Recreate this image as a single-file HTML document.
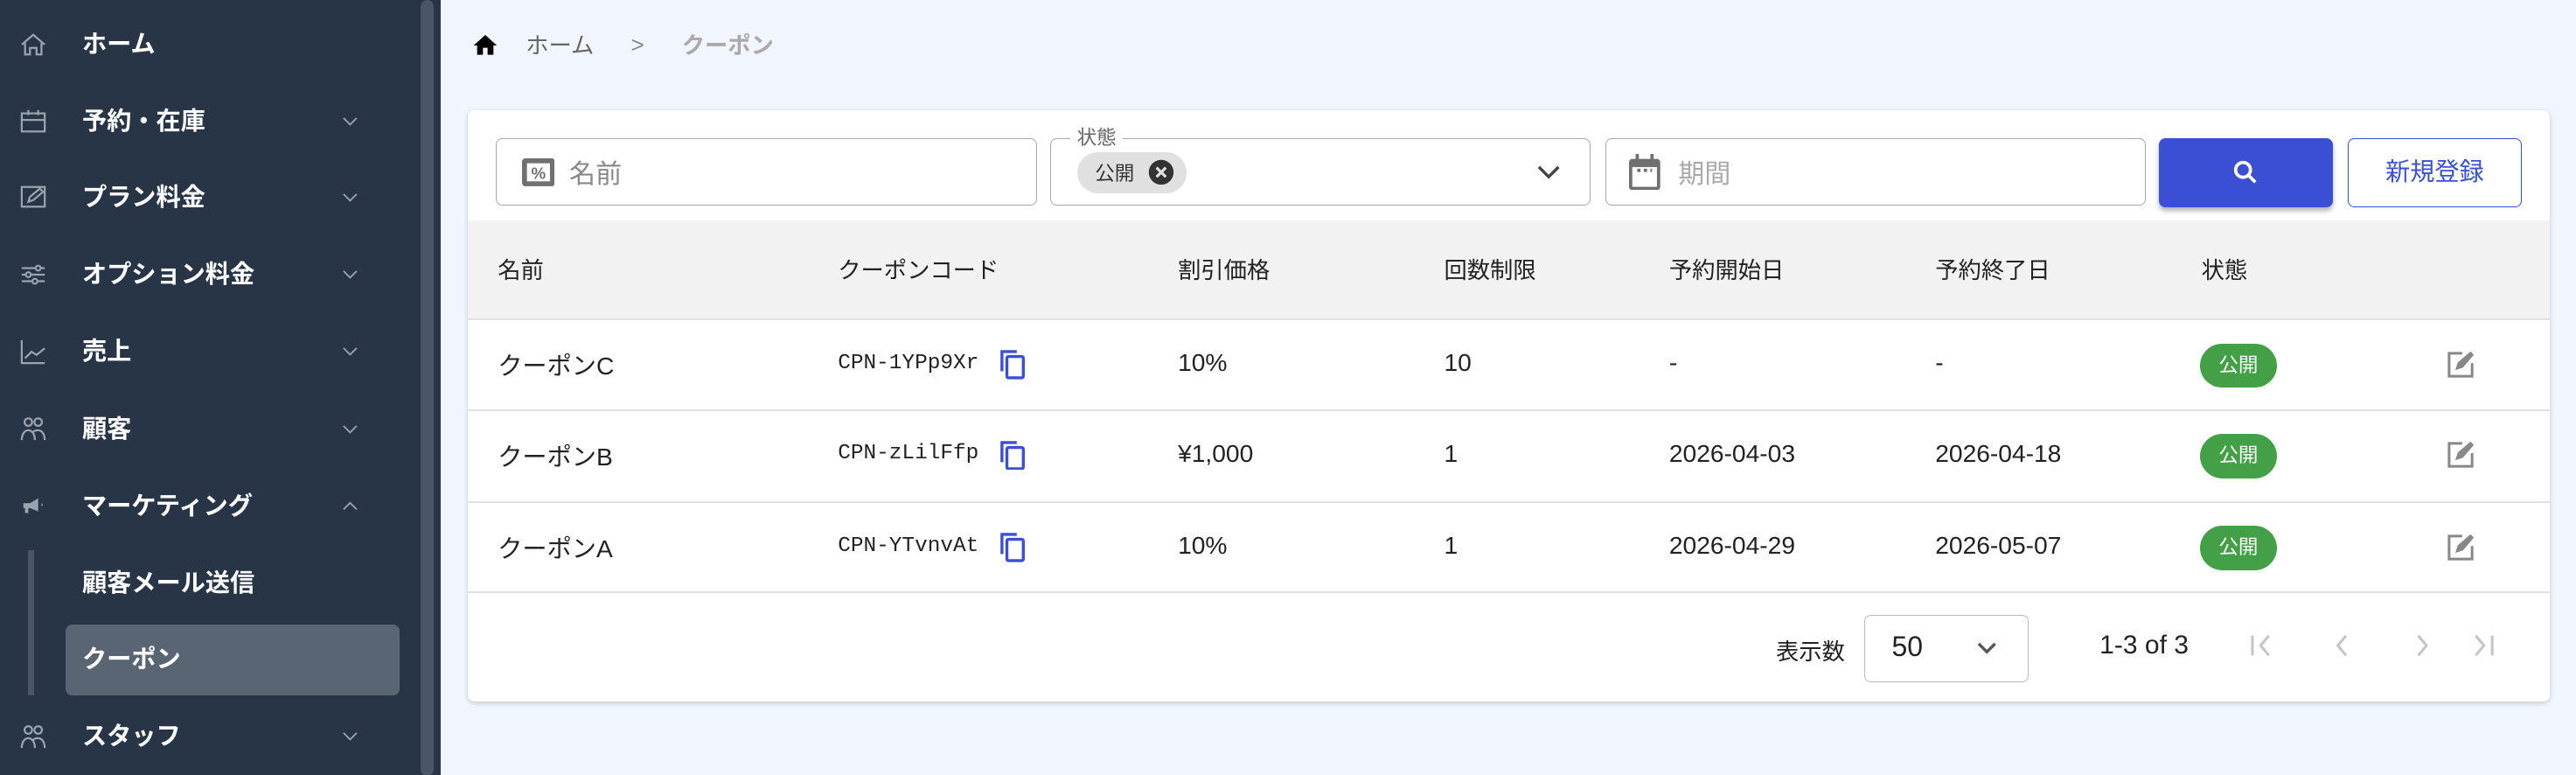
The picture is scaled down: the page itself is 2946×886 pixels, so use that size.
<!DOCTYPE html>
<html><head><meta charset="utf-8"><style>
html,body{margin:0;padding:0;width:2946px;height:886px;overflow:hidden;background:#f1f6fe}
#z{zoom:1.87883;width:1568px;height:472px;position:relative;font-family:"Liberation Sans","Noto Sans CJK JP",sans-serif;color:#222}
.a{position:absolute}
#side{left:0;top:0;width:268px;height:472px;background:#283547}
.mi{position:absolute;left:50px;color:#fff;font-weight:bold;font-size:15px;line-height:20px}
.ic{position:absolute;left:12px;width:16px;height:16px}
.ch{position:absolute;left:208px;width:10px;height:6px}
#card{left:285px;top:67px;width:1267px;height:360px;background:#fff;border-radius:4px;box-shadow:0 1px 3px rgba(0,0,0,.18)}
.inp{position:absolute;top:17px;height:41px;border:1px solid #a8a8a8;border-radius:4px;box-sizing:border-box}
.th{position:absolute;top:86px;font-size:14px;color:#222}
.td{position:absolute;font-size:15px;color:#222}
.code{font-family:"Liberation Mono",monospace;font-size:13px}
.chip{position:absolute;left:1054px;width:47px;height:27px;border-radius:14px;background:#43a047;color:#fff;font-size:12px;text-align:center;line-height:27px}
.hr{position:absolute;left:0;width:1267px;height:1px;background:#e0e0e0}
</style></head><body><div id="z">
<div class="a" id="side">
<svg class="ic" style="top:19px" viewBox="0 0 16 16" fill="none" stroke="#9aa3ad" stroke-width="1.2"><path d="M1 8L8 2l7 6M3 7v7h3v-4h4v4h3V7"/></svg><div class="mi" style="top:17px">ホーム</div>
<svg class="ic" style="top:66px" viewBox="0 0 16 16" fill="none" stroke="#9aa3ad" stroke-width="1.2"><rect x="1" y="3" width="14" height="11"/><path d="M1 7h14M5 1v3M11 1v3"/></svg><div class="mi" style="top:64px">予約・在庫</div>
<svg class="ic" style="top:112px" viewBox="0 0 16 16" fill="none" stroke="#9aa3ad" stroke-width="1.2"><rect x="1" y="2" width="14" height="12"/><path d="M5 11l1-3 6-5 2 2-6 5z"/></svg><div class="mi" style="top:110px">プラン料金</div>
<svg class="ic" style="top:159px" viewBox="0 0 16 16" fill="none" stroke="#9aa3ad" stroke-width="1.2"><path d="M1 4h14M1 8h14M1 12h14"/><circle cx="11" cy="4" r="1.5" fill="#283547"/><circle cx="5" cy="8" r="1.5" fill="#283547"/><circle cx="9" cy="12" r="1.5" fill="#283547"/></svg><div class="mi" style="top:157px">オプション料金</div>
<svg class="ic" style="top:206px" viewBox="0 0 16 16" fill="none" stroke="#9aa3ad" stroke-width="1.2"><path d="M1 1v14h14M3 12l4-4 3 2 5-4"/></svg><div class="mi" style="top:204px">売上</div>
<svg class="ic" style="top:253px" viewBox="0 0 16 16" fill="none" stroke="#9aa3ad" stroke-width="1.2"><circle cx="5" cy="4" r="2.3"/><circle cx="11" cy="4" r="2.3"/><path d="M1 15c0-4 2-6 4-6s4 2 4 6M8 10c1-1 2-1 3-1 2 0 4 2 4 6"/></svg><div class="mi" style="top:251px">顧客</div>
<svg class="ic" style="top:300px" viewBox="0 0 16 16" fill="#9aa3ad"><path d="M2 6h4l5-3v8L6 9H5v3H3V9H2z"/><path d="M13 6l1 1-1 1z"/></svg><div class="mi" style="top:298px">マーケティング</div>
<div class="a" style="left:17px;top:335px;width:4px;height:88px;background:#4a5565"></div>
<div class="mi" style="top:345px">顧客メール送信</div>
<div class="a" style="left:40px;top:380px;width:203px;height:43px;background:#5a6573;border-radius:4px"></div>
<div class="mi" style="top:391px">クーポン</div>
<svg class="ic" style="top:440px" viewBox="0 0 16 16" fill="none" stroke="#9aa3ad" stroke-width="1.2"><circle cx="5" cy="4" r="2.3"/><circle cx="11" cy="4" r="2.3"/><path d="M1 15c0-4 2-6 4-6s4 2 4 6M8 10c1-1 2-1 3-1 2 0 4 2 4 6"/></svg><div class="mi" style="top:438px">スタッフ</div>
<svg class="ch" style="top:71px" viewBox="0 0 10 6" fill="none" stroke="#9aa3ad"><path d="M1 1l4 4 4-4"/></svg>
<svg class="ch" style="top:117px" viewBox="0 0 10 6" fill="none" stroke="#9aa3ad"><path d="M1 1l4 4 4-4"/></svg>
<svg class="ch" style="top:164px" viewBox="0 0 10 6" fill="none" stroke="#9aa3ad"><path d="M1 1l4 4 4-4"/></svg>
<svg class="ch" style="top:211px" viewBox="0 0 10 6" fill="none" stroke="#9aa3ad"><path d="M1 1l4 4 4-4"/></svg>
<svg class="ch" style="top:258px" viewBox="0 0 10 6" fill="none" stroke="#9aa3ad"><path d="M1 1l4 4 4-4"/></svg>
<svg class="ch" style="top:305px" viewBox="0 0 10 6" fill="none" stroke="#9aa3ad"><path d="M1 5l4-4 4 4"/></svg>
<svg class="ch" style="top:445px" viewBox="0 0 10 6" fill="none" stroke="#9aa3ad"><path d="M1 1l4 4 4-4"/></svg>
<div class="a" style="left:256px;top:0;width:8px;height:472px;background:#4a5565;border-radius:4px"></div>
</div>
<svg class="a" style="left:287px;top:19px;width:17px;height:17px" viewBox="0 0 24 24"><path d="M10 20v-6h4v6h5v-8h3L12 3 2 12h3v8z"/></svg>
<div class="a" style="left:320px;top:16px;font-size:14px;color:#666">ホーム</div>
<div class="a" style="left:384px;top:19px;font-size:14px;color:#888">&gt;</div>
<div class="a" style="left:415px;top:16px;font-size:14px;color:#aaa;font-weight:bold">クーポン</div>
<div class="a" id="card">
<div class="inp" style="left:17px;width:329px"><svg class="a" style="left:15px;top:12px;width:20px;height:17px" viewBox="0 0 20 17"><rect x="0" y="0" width="20" height="17" rx="2" fill="#707070"/><rect x="3" y="3" width="14" height="11" fill="#fff"/><text x="10" y="12.5" font-size="10" text-anchor="middle" fill="#707070" font-weight="bold" font-family="Liberation Sans">%</text></svg><span class="a" style="left:44px;top:8px;font-size:16px;color:#888">名前</span></div>
<div class="inp" style="left:354px;width:329px"><span class="a" style="left:12px;top:-10px;background:#fff;padding:0 4px;font-size:12px;color:#666">状態</span><div class="a" style="left:16px;top:8px;width:67px;height:25px;border-radius:13px;background:#e0e0e0"><span class="a" style="left:11px;top:4px;font-size:12px;color:#333">公開</span><svg class="a" style="left:43px;top:4px;width:17px;height:17px" viewBox="0 0 18 18"><circle cx="9" cy="9" r="8" fill="#333"/><path d="M6 6l6 6M12 6l-6 6" stroke="#e0e0e0" stroke-width="1.8"/></svg></div><svg class="a" style="left:296px;top:16px;width:14px;height:9px" viewBox="0 0 14 9" fill="none" stroke="#444" stroke-width="1.8"><path d="M1 1l6 6 6-6"/></svg></div>
<div class="inp" style="left:692px;width:329px"><svg class="a" style="left:14px;top:9px;width:19px;height:22px" viewBox="0 0 19 22"><rect x="0" y="3" width="19" height="19" rx="2" fill="#707070"/><rect x="4" y="0" width="2" height="5" fill="#707070"/><rect x="13" y="0" width="2" height="5" fill="#707070"/><rect x="2" y="8" width="15" height="12" fill="#fff"/><path d="M5 10h2M9 10h2M13 10h1" stroke="#707070" stroke-width="2"/></svg><span class="a" style="left:44px;top:8px;font-size:16px;color:#aaa">期間</span></div>
<div class="a" style="left:1029px;top:17px;width:106px;height:42px;background:#3a4fd4;border-radius:4px;box-shadow:0 2px 3px rgba(0,0,0,.3)"><svg class="a" style="left:45px;top:13px;width:16px;height:16px" viewBox="0 0 16 16" fill="none" stroke="#fff" stroke-width="2"><circle cx="6.5" cy="6.5" r="4.5"/><path d="M10 10l4 4"/></svg></div>
<div class="a" style="left:1144px;top:17px;width:106px;height:42px;border:1px solid #3a4fd4;border-radius:4px;box-sizing:border-box;color:#3a4fd4;font-size:15px;text-align:center;line-height:40px">新規登録</div>
<div class="a" style="left:0;top:67px;width:1267px;height:60px;background:#f2f2f2"></div>
<div class="hr" style="top:127px"></div>
<div class="th" style="left:18px">名前</div><div class="th" style="left:225px">クーポンコード</div><div class="th" style="left:432px">割引価格</div><div class="th" style="left:594px">回数制限</div><div class="th" style="left:731px">予約開始日</div><div class="th" style="left:893px">予約終了日</div><div class="th" style="left:1055px">状態</div>
<div class="hr" style="top:182px"></div><div class="hr" style="top:238px"></div><div class="hr" style="top:293px"></div>

<div class="td" style="left:18px;top:144px">クーポンC</div><div class="td code" style="left:225px;top:147px">CPN-1YPp9Xr</div><div class="td" style="left:432px;top:145px">10%</div><div class="td" style="left:594px;top:145px">10</div><div class="td" style="left:731px;top:145px">-</div><div class="td" style="left:893px;top:145px">-</div>
<div class="td" style="left:18px;top:199px">クーポンB</div><div class="td code" style="left:225px;top:202px">CPN-zLilFfp</div><div class="td" style="left:432px;top:200px">¥1,000</div><div class="td" style="left:594px;top:200px">1</div><div class="td" style="left:731px;top:200px">2026-04-03</div><div class="td" style="left:893px;top:200px">2026-04-18</div>
<div class="td" style="left:18px;top:255px">クーポンA</div><div class="td code" style="left:225px;top:258px">CPN-YTvnvAt</div><div class="td" style="left:432px;top:256px">10%</div><div class="td" style="left:594px;top:256px">1</div><div class="td" style="left:731px;top:256px">2026-04-29</div><div class="td" style="left:893px;top:256px">2026-05-07</div>

<svg class="a" style="left:324px;top:146px;width:15px;height:18px" viewBox="0 0 15 18" fill="none" stroke="#3a4fd4" stroke-width="1.8"><path d="M1 13V1h9"/><rect x="4" y="4" width="10" height="13" rx="1"/></svg>
<svg class="a" style="left:324px;top:201px;width:15px;height:18px" viewBox="0 0 15 18" fill="none" stroke="#3a4fd4" stroke-width="1.8"><path d="M1 13V1h9"/><rect x="4" y="4" width="10" height="13" rx="1"/></svg>
<svg class="a" style="left:324px;top:257px;width:15px;height:18px" viewBox="0 0 15 18" fill="none" stroke="#3a4fd4" stroke-width="1.8"><path d="M1 13V1h9"/><rect x="4" y="4" width="10" height="13" rx="1"/></svg>
<div class="chip" style="top:142px">公開</div><div class="chip" style="top:197px">公開</div><div class="chip" style="top:253px">公開</div>
<svg class="a" style="left:1205px;top:147px;width:16px;height:16px" viewBox="0 0 16 16" fill="none" stroke="#888" stroke-width="1.6"><path d="M9 1H1v14h14V7"/><path d="M6 10l1-3 7-6 1 1-6 7z" fill="#888"/></svg>
<svg class="a" style="left:1205px;top:202px;width:16px;height:16px" viewBox="0 0 16 16" fill="none" stroke="#888" stroke-width="1.6"><path d="M9 1H1v14h14V7"/><path d="M6 10l1-3 7-6 1 1-6 7z" fill="#888"/></svg>
<svg class="a" style="left:1205px;top:258px;width:16px;height:16px" viewBox="0 0 16 16" fill="none" stroke="#888" stroke-width="1.6"><path d="M9 1H1v14h14V7"/><path d="M6 10l1-3 7-6 1 1-6 7z" fill="#888"/></svg>

<div class="a" style="left:796px;top:318px;font-size:14px">表示数</div>
<div class="a" style="left:850px;top:307px;width:100px;height:41px;border:1px solid #bbb;border-radius:4px;box-sizing:border-box"><span class="a" style="left:16px;top:9px;font-size:17px">50</span><svg class="a" style="left:68px;top:16px;width:12px;height:8px" viewBox="0 0 12 8" fill="none" stroke="#555" stroke-width="1.8"><path d="M1 1l5 5 5-5"/></svg></div>
<div class="a" style="left:993px;top:317px;font-size:16px">1-3 of 3</div>
<svg class="a" style="left:1085px;top:318px;width:150px;height:16px" viewBox="0 0 150 16" fill="none" stroke="#c4c4c4" stroke-width="1.6"><path d="M1 2v12M11 2L6 8l5 6M58 2l-5 6 5 6M102 2l5 6-5 6M147 2v12M137 2l5 6-5 6"/></svg>
</div>
</div></body></html>
